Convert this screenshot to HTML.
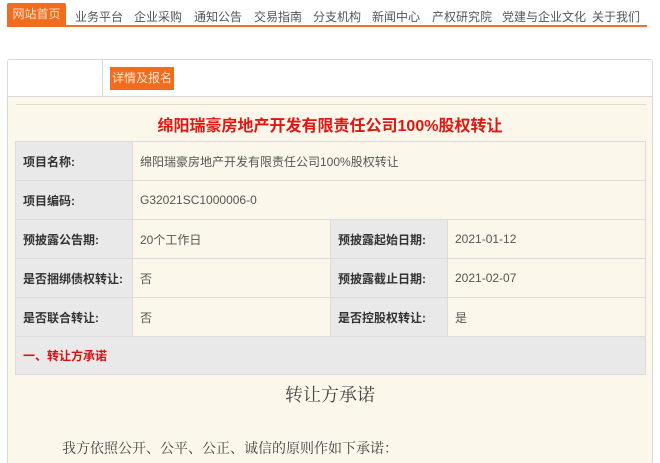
<!DOCTYPE html>
<html><head><meta charset="utf-8"><style>
*{margin:0;padding:0;box-sizing:border-box}
html,body{width:660px;height:463px;overflow:hidden}
body{background:#fff;font-family:"Liberation Sans","Noto Sans CJK SC",sans-serif;font-size:12px;color:#333;position:relative}
.nav{position:absolute;left:7px;top:3px;width:640px;height:24px;border-bottom:2px solid #f0722a}
.nav span{position:absolute;top:5px;font-size:12px;color:#555;white-space:nowrap}
.nav .on{left:0;top:0;width:59px;height:24px;background:#f26c1e;color:#fde2cf;text-align:center;line-height:23px;border-radius:2px 2px 0 0}
.panel{position:absolute;left:7px;top:59px;width:646px;height:420px;border:1px solid #d8d8d8;border-radius:3px;background:#fbf7ea}
.hd{position:absolute;left:0;top:0;width:644px;height:37px;background:#fff;border-bottom:1px solid #d8d8d8}
.hd .l{position:absolute;left:94px;top:0;width:1px;height:37px;background:#d8d8d8}
.btn{position:absolute;left:102px;top:7px;width:64px;height:23px;background:#f26c1e;color:#fde8d8;font-size:12px;text-align:center;line-height:23px}
.line{position:absolute;left:8px;top:44px;width:630px;height:1px;background:#e2dccb}
.title{position:absolute;left:0;top:52px;width:644px;text-align:center;color:#e4140f;font-weight:bold;font-size:16px}
table{position:absolute;left:7px;top:81px;width:631px;border-collapse:collapse}
td{border:1px solid #dcdcdc;height:39px;font-size:12px;padding-left:7px}
td.k{background:#e9e9e9;font-weight:bold;color:#333;width:117px}
td.v{background:#fbf7ea;color:#555;width:198px}
td.sec{background:#e9e9e9;color:#d81010;font-weight:bold;height:38px}
.h2{position:absolute;left:0;top:321px;width:644px;text-align:center;font-family:"Noto Serif CJK SC",serif;font-size:18px;color:#444}
.p{position:absolute;left:54px;top:378px;font-family:"Noto Serif CJK SC",serif;font-size:14px;color:#444}
</style></head><body>
<div class="nav">
<span class="on">网站首页</span>
<span style="left:68px">业务平台</span>
<span style="left:127px">企业采购</span>
<span style="left:187px">通知公告</span>
<span style="left:247px">交易指南</span>
<span style="left:306px">分支机构</span>
<span style="left:365px">新闻中心</span>
<span style="left:425px">产权研究院</span>
<span style="left:495px">党建与企业文化</span>
<span style="left:585px">关于我们</span>
</div>
<div class="panel">
<div class="hd"><div class="l"></div><div class="btn">详情及报名</div></div>
<div class="line"></div>
<div class="title">绵阳瑞豪房地产开发有限责任公司100%股权转让</div>
<table>
<tr><td class="k">项目名称:</td><td class="v" colspan="3">绵阳瑞豪房地产开发有限责任公司100%股权转让</td></tr>
<tr><td class="k">项目编码:</td><td class="v" colspan="3">G32021SC1000006-0</td></tr>
<tr><td class="k">预披露公告期:</td><td class="v">20个工作日</td><td class="k">预披露起始日期:</td><td class="v">2021-01-12</td></tr>
<tr><td class="k">是否捆绑债权转让:</td><td class="v">否</td><td class="k">预披露截止日期:</td><td class="v">2021-02-07</td></tr>
<tr><td class="k">是否联合转让:</td><td class="v">否</td><td class="k">是否控股权转让:</td><td class="v">是</td></tr>
<tr><td class="sec" colspan="4">一、转让方承诺</td></tr>
</table>
<div class="h2">转让方承诺</div>
<div class="p">我方依照公开、公平、公正、诚信的原则作如下承诺：</div>
</div>
</body></html>
